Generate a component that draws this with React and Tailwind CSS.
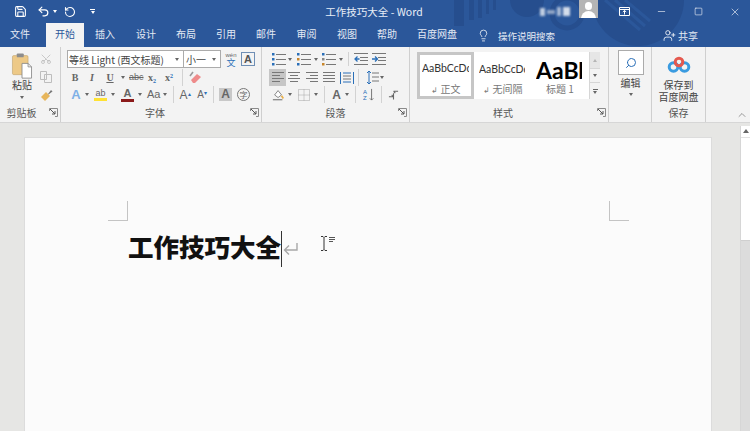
import { Save, Undo2, RotateCw, Minus, Square, X, Lightbulb, UserPlus, Search, Scissors, ChevronUp } from 'lucide-react';

const TABS = [
  ['文件', 'w-[46px]'], ['开始', 'w-[38px]'], ['插入', 'w-[42px]'], ['设计', 'w-[40px]'], ['布局', 'w-[40px]'],
  ['引用', 'w-[40px]'], ['邮件', 'w-[40px]'], ['审阅', 'w-[41px]'], ['视图', 'w-[40px]'], ['帮助', 'w-[40px]'], ['百度网盘', 'w-[60px]'],
];

// petite flèche des boutons déroulants
function Caret({ cls = 'border-t-[#666]' }) {
  return <span className={`block w-0 h-0 border-x-[2.5px] border-x-transparent border-t-[3px] ${cls}`}></span>;
}

function Launcher() {
  return (
    <svg width="9" height="9" viewBox="0 0 9 9" className="shrink-0">
      <path d="M.5 3V.5H8.500V8.500H6" fill="none" stroke="#8a8a8a" />
      <path d="M1 1l5 5M6 3v3H3" fill="none" stroke="#555" />
    </svg>
  );
}

function Sep({ cls = 'h-[17px]' }) {
  return <span className={`block w-px bg-[#d2d2d2] ${cls}`}></span>;
}

// lignes de texte pour les icônes de paragraphe
function Lines({ rows, color = '#777' }) {
  return (
    <svg width="14" height="13" viewBox="0 0 14 13" className="block">
      {rows.map((r, i) => <rect key={i} x={r[0]} y={i * 3 + 1} width={r[1]} height="1" fill={color} />)}
    </svg>
  );
}

function ListIcon({ marks }) {
  return (
    <svg width="14" height="14" viewBox="0 0 14 14" className="block">
      {[1, 6, 11].map((y, i) => (
        <g key={y}>
          <rect x="0" y={y} width="2.500" height="2.500" fill={marks[i]} />
          <rect x="4" y={y + 1} width="10" height="1" fill="#777" />
        </g>
      ))}
    </svg>
  );
}

function IndentIcon({ flip }) {
  return (
    <svg width="14" height="12" viewBox="0 0 14 12" className="block">
      <path d="M0 .5h14M6 4.500h8M6 7.500h8M0 11.500h14" stroke="#777" />
      <path d={flip ? 'M0 6h5M3 3.500L5.500 6 3 8.500' : 'M5.500 6H1M3.500 3.500L1 6l2.500 2.500'} fill="none" stroke="#2a6fb8" strokeWidth="1.300" />
    </svg>
  );
}

function ClipboardIcon() {
  return (
    <svg width="22" height="26" viewBox="0 0 24 30" className="block">
      <rect x="1" y="3" width="18" height="22" rx="1.500" fill="#edc987" stroke="#b99a63" strokeWidth=".6" />
      <rect x="6" y="0.500" width="8" height="4.500" rx="1" fill="#8d8d8d" />
      <path d="M12 12h7l4 4v13H12z" fill="#fff" stroke="#8a8a8a" />
      <path d="M19 12v4h4" fill="none" stroke="#8a8a8a" />
    </svg>
  );
}

function BaiduLogo() {
  return (
    <svg width="24" height="18" viewBox="0 0 24 18" className="block">
      <circle cx="6.500" cy="11" r="4.300" fill="none" stroke="#3a9be0" strokeWidth="3" />
      <circle cx="17.500" cy="11" r="4.300" fill="none" stroke="#3a9be0" strokeWidth="3" />
      <circle cx="12" cy="6" r="3.800" fill="none" stroke="#e5594f" strokeWidth="3" />
    </svg>
  );
}

function StyleCard({ sample, sampleCls, clipCls, label, mark, cls }) {
  return (
    <div className={`flex flex-col items-center shrink-0 overflow-hidden ${cls}`}>
      <div className={`h-[27px] w-full flex items-center font-['Lato',sans-serif] ${sampleCls}`}>
        <span className={`block overflow-hidden whitespace-nowrap ${clipCls}`}>{sample}</span>
      </div>
      <div className="text-[10px] leading-[13px] text-[#777]">{mark && <span className="mr-[3px] text-[8px]">↲</span>}{label}</div>
    </div>
  );
}

function Group({ cls, label, labelCls = '', launcher, children }) {
  return (
    <div className={`h-[75px] flex flex-col shrink-0 border-r border-[#cfcfcf] ${cls}`}>
      <div className="flex-1 min-h-0">{children}</div>
      <div className={`relative h-[17px] text-[10px] leading-[15px] text-[#555] text-center ${labelCls}`}>
        {label}
        {launcher && <span className="absolute right-[2px] top-[3px]"><Launcher /></span>}
      </div>
    </div>
  );
}

export default function App() {
  return (
    <div className="w-[750px] h-[431px] overflow-hidden flex flex-col bg-[#e6e6e4] font-['Noto_Sans_CJK_SC',sans-serif] text-[#444]">
      <div className="relative bg-[#2b579a] shrink-0 overflow-hidden">
        {/* Motif décoratif de la barre de titre */}
        <svg className="absolute left-[440px] top-0" width="250" height="47" viewBox="0 0 250 47">
          <g fill="#264e8e">
            <rect x="14" y="0" width="10" height="26" /><rect x="29" y="0" width="5" height="20" />
            <rect x="38" y="0" width="4" height="18" /><rect x="46" y="0" width="3" height="14" /><rect x="53" y="0" width="3" height="10" />
            <circle cx="87" cy="0" r="17" />
            <circle cx="198" cy="0" r="46" />
          </g>
          <g fill="none" stroke="#2b579a" strokeWidth="3">
            <path d="M165 0l35 30M175 0l30 26M185 0l25 21" />
          </g>
          <circle cx="127" cy="13" r="15" fill="none" stroke="#264e8e" strokeWidth="5" />
        </svg>

        {/* Barre de titre */}
        <header className="relative h-[23px] text-white flex items-center">
          <div className="flex items-center pl-[14px] w-[300px]">
            <Save size={13} strokeWidth={2} className="w-[13px]" />
            <Undo2 size={13} strokeWidth={2.2} className="ml-[10px]" />
            <span className="ml-[3px]"><Caret cls="border-t-white" /></span>
            <RotateCw size={12} strokeWidth={2.2} className="ml-[7px] -scale-x-100" />
            <span className="ml-[14px] flex flex-col items-center gap-px">
              <span className="w-[5px] h-px bg-white"></span>
              <Caret cls="border-t-white" />
            </span>
          </div>
          <div className="w-[148px] text-center text-[10.5px] whitespace-nowrap text-[#e8eef7]">工作技巧大全 - Word</div>
          <div className="ml-[92px] flex items-center gap-[2px] w-[32px] blur-[1px]">
            <span className="w-[5px] h-[8px] bg-white/70"></span><span className="w-[8px] h-[4px] bg-white/50"></span>
            <span className="w-[4px] h-[9px] bg-white/60"></span><span className="w-[7px] h-[9px] bg-white/80"></span>
          </div>
          <div className="relative ml-[7px] w-[19px] h-[18px] -mt-[5px] bg-[#b5b5b5] overflow-hidden">
            <span className="absolute left-[6px] top-[2px] w-[7px] h-[8px] rounded-full bg-white"></span>
            <span className="absolute left-[2px] top-[11px] w-[15px] h-[10px] rounded-t-full bg-white"></span>
          </div>
          <div className="ml-[21px] flex items-center">
            <svg width="11" height="9" viewBox="0 0 11 9"><path d="M.5.5h10v8H.5zM.5 2.500h10M5.500 7.500v-4M3.800 5l1.700-1.500L7.200 5" fill="none" stroke="#fff" /></svg>
            <Minus size={11} strokeWidth={1.300} className="ml-[26px]" />
            <Square size={9} strokeWidth={1.500} className="ml-[27px]" />
            <X size={12} strokeWidth={1.200} className="ml-[26px]" />
          </div>
        </header>

        {/* Onglets */}
        <nav className="relative h-[24px] text-white flex items-end text-[10px]">
          {TABS.map(([name, w], i) => (
            <div
              key={name}
              className={`${w} h-[24px] text-center leading-[22px] ${name === '开始' ? 'bg-[#f3f3f3] text-[#2b579a]' : 'text-[#e4eaf4]'} ${i === 0 ? 'pr-[6px]' : ''}`}
            >
              {name}
            </div>
          ))}
          <Lightbulb size={13} strokeWidth={1.400} className="ml-[10px] mb-[5px]" />
          <span className="ml-[8px] w-[58px] text-[9.500px] leading-[22px] whitespace-nowrap text-[#e4eaf4]">操作说明搜索</span>
          <UserPlus size={13} strokeWidth={1.500} className="ml-[107px] mb-[5px]" />
          <span className="ml-[2px] leading-[22px] text-[#e4eaf4]">共享</span>
        </nav>
      </div>

      {/* Ruban */}
      <section className="relative h-[75px] bg-[#f3f3f3] flex shrink-0 border-b border-[#d6d6d6] box-content">
        <Group cls="w-[61px]" label="剪贴板" labelCls="pr-[17px]" launcher>
          <div className="flex pl-[11px] pt-[6px]">
            <div className="w-[22px] flex flex-col items-center">
              <ClipboardIcon />
              <span className="text-[10px] leading-[13px] -mt-[1px] whitespace-nowrap">粘贴</span>
              <span className="mt-[5px]"><Caret /></span>
            </div>
            <div className="ml-[6px] flex flex-col items-center gap-[6px] w-[14px]">
              <Scissors size={12} strokeWidth={1.400} className="text-[#b5b5b5] -rotate-90" />
              <svg width="12" height="12" viewBox="0 0 12 12" className="block"><path d="M.5.5h6v8h-6zM4.500 3.500h7v8h-7z" fill="#f3f3f3" stroke="#bdbdbd" /></svg>
              <svg width="13" height="13" viewBox="0 0 13 13" className="block"><path d="M1 8l5-5 4 4-5 5z" fill="#e7b65c" /><path d="M8 5l3-4 1.500 1.500-4 3z" fill="#777" /></svg>
            </div>
          </div>
        </Group>

        <Group cls="w-[201px]" label="字体" labelCls="pr-[12px]" launcher>
          <div className="pl-[6px] pt-[3px] flex flex-col">
            <div className="flex items-center">
              <div className="w-[117px] h-[18px] bg-white border border-[#ababab] flex items-center justify-between pl-[1px] pr-[4px] text-[10px] whitespace-nowrap">
                等线 Light (西文标题)<Caret />
              </div>
              <div className="w-[37px] h-[18px] bg-white border border-l-0 border-[#ababab] flex items-center justify-between pl-[2px] pr-[4px] text-[10px]">
                小一<Caret />
              </div>
              <div className="ml-[3px] w-[14px] flex flex-col items-center leading-none">
                <span className="text-[6px] text-[#666] font-['Liberation_Sans',sans-serif]">wén</span>
                <span className="text-[9px] text-[#2a6fb8]">文</span>
              </div>
              <div className="ml-[3px] w-[14px] h-[14px] border border-[#6f8fb5] flex items-center justify-center text-[11px] font-bold font-['Liberation_Sans',sans-serif] text-[#555]">A</div>
            </div>
            <div className="mt-[2px] h-[15px] flex items-center font-bold text-[10px] text-[#666] font-['Liberation_Serif',serif]">
              <span className="ml-[2px] w-[12px] text-center">B</span>
              <span className="ml-[5px] w-[12px] text-center italic">I</span>
              <span className="ml-[6px] w-[12px] text-center underline">U</span>
              <span className="ml-[5px]"><Caret /></span>
              <span className="ml-[4px] w-[14px] text-center line-through font-['Liberation_Sans',sans-serif] font-normal text-[9px]">abc</span>
              <span className="ml-[3px] w-[12px] text-center">x<sub className="text-[#2a6fb8] text-[6px]">2</sub></span>
              <span className="ml-[5px] w-[12px] text-center">x<sup className="text-[#2a6fb8] text-[6px]">2</sup></span>
              <span className="ml-[7px]"><Sep /></span>
              <svg className="ml-[6px] block" width="14" height="14" viewBox="0 0 14 14"><path d="M2 9l6-6 4 3-6 6H4z" fill="#ee8b8b" /><path d="M4 1L1 5" stroke="#999" strokeWidth="1.500" /></svg>
            </div>
            <div className="mt-px h-[17px] flex items-center font-['Liberation_Sans',sans-serif] text-[#666]">
              <span className="ml-[3px] w-[12px] text-center text-[13px] font-bold text-[#7fb0e6]">A</span>
              <span className="ml-[3px]"><Caret /></span>
              <span className="ml-[5px] w-[13px] flex flex-col items-center text-[9px] leading-[10px]">ab<span className="w-[13px] h-[3px] bg-[#ffe233]"></span></span>
              <span className="ml-[4px]"><Caret /></span>
              <span className="ml-[6px] w-[13px] flex flex-col items-center text-[11px] font-bold leading-[11px]">A<span className="w-[13px] h-[3px] bg-[#8b1a1a]"></span></span>
              <span className="ml-[4px]"><Caret /></span>
              <span className="ml-[5px] w-[13px] text-[11px]">Aa</span>
              <span className="ml-[3px]"><Caret /></span>
              <span className="ml-[6px]"><Sep /></span>
              <span className="ml-[4px] w-[14px] text-[12px] text-center leading-none">A<sup className="text-[#2a6fb8] text-[6px]">▴</sup></span>
              <span className="ml-[3px] w-[14px] text-[10px] text-center leading-none">A<sup className="text-[#2a6fb8] text-[6px]">▾</sup></span>
              <span className="ml-[4px]"><Sep /></span>
              <span className="ml-[5px] w-[13px] h-[13px] bg-[#c8c8c8] text-[12px] font-bold leading-[13px] text-center">A</span>
              <span className="ml-[5px] w-[13px] h-[13px] rounded-full border border-[#777] text-[8px] leading-[11px] text-center font-['Noto_Sans_CJK_SC',sans-serif]">字</span>
            </div>
          </div>
        </Group>

        <Group cls="w-[148px]" label="段落" launcher>
          <div className="pl-[7px] pt-[5px] flex flex-col">
            <div className="h-[14px] flex items-center">
              <span className="ml-[3px]"><ListIcon marks={['#2a6fb8', '#2a6fb8', '#2a6fb8']} /></span>
              <span className="ml-[2px]"><Caret /></span>
              <span className="ml-[5px]"><ListIcon marks={['#2a6fb8', '#c8862a', '#2a6fb8']} /></span>
              <span className="ml-[3px]"><Caret /></span>
              <span className="ml-[4px]"><ListIcon marks={['#2a6fb8', '#888', '#c8862a']} /></span>
              <span className="ml-[3px]"><Caret /></span>
              <span className="ml-[5px]"><Sep cls="h-[14px]" /></span>
              <span className="ml-[5px]"><IndentIcon /></span>
              <span className="ml-[4px]"><IndentIcon flip /></span>
            </div>
            <div className="mt-[3px] h-[17px] flex items-center">
              <span className="w-[17px] h-[17px] bg-[#c6c6c6] flex items-center justify-center">
                <Lines rows={[[1, 12], [1, 8], [1, 12], [1, 8]]} />
              </span>
              <span className="ml-[1px]"><Lines rows={[[1, 12], [3, 8], [1, 12], [3, 8]]} /></span>
              <span className="ml-[4px]"><Lines rows={[[1, 12], [5, 8], [1, 12], [5, 8]]} /></span>
              <span className="ml-[3px]"><Lines rows={[[1, 12], [1, 12], [1, 12], [1, 12]]} /></span>
              <span className="ml-[4px]">
                <svg width="14" height="14" viewBox="0 0 14 14" className="block"><path d="M.5 1v12M13.500 1v12M3 2h8M3 11h8" stroke="#2a6fb8" /><path d="M3 5h8M3 8h8" stroke="#777" /></svg>
              </span>
              <span className="ml-[4px]"><Sep /></span>
              <span className="ml-[7px]">
                <svg width="13" height="15" viewBox="0 0 13 15" className="block"><path d="M3 1v13M1 3l2-2 2 2M1 12l2 2 2-2" fill="none" stroke="#2a6fb8" /><path d="M6 3h7M6 7h7M6 11h7" stroke="#777" /></svg>
              </span>
              <span className="ml-[1px]"><Caret /></span>
            </div>
            <div className="h-[17px] flex items-center">
              <span className="ml-[3px]">
                <svg width="13" height="15" viewBox="0 0 15 15" className="block"><path d="M3 8l4-5 4 5-4 3z" fill="#fff" stroke="#777" /><path d="M11 9l2 3" stroke="#e9b04a" strokeWidth="2" /><path d="M1 13.500h11" stroke="#888" strokeWidth="1.500" /></svg>
              </span>
              <span className="ml-[3px]"><Caret /></span>
              <span className="ml-[6px]">
                <svg width="12" height="12" viewBox="0 0 12 12" className="block"><path d="M.5.5h11v11H.5zM6 .5v11M.5 6h11" fill="none" stroke="#a5a5a5" strokeDasharray="1 1" /></svg>
              </span>
              <span className="ml-[4px]"><Caret /></span>
              <span className="ml-[6px]"><Sep /></span>
              <span className="ml-[5px] w-[13px] text-center text-[12px] font-bold leading-none font-['Liberation_Sans',sans-serif] text-[#666]">A</span>
              <span className="ml-[2px]"><Caret /></span>
              <span className="ml-[6px]"><Sep /></span>
              <span className="ml-[7px]">
                <svg width="12" height="15" viewBox="0 0 14 15" className="block"><text x="0" y="7" fontSize="7" fill="#2a6fb8" fontFamily="Liberation Sans">A</text><text x="0" y="14" fontSize="7" fill="#2a6fb8" fontFamily="Liberation Sans">Z</text><path d="M10 1v13M8 12l2 2 2-2" fill="none" stroke="#666" /></svg>
              </span>
              <span className="ml-[6px]"><Sep /></span>
              <span className="ml-[6px]">
                <svg width="11" height="13" viewBox="0 0 12 13" className="block"><path d="M1 9h5M6 9l-2-2M11 3H6M6 3l2 2M6 5v7" fill="none" stroke="#666" strokeWidth="1.200" /></svg>
              </span>
            </div>
          </div>
        </Group>

        <Group cls="w-[199px]" label="样式" labelCls="pr-[12px]" launcher>
          <div className="pl-[7px] pt-[5px]">
            <div className="w-[183px] h-[47px] bg-white flex">
              <StyleCard sample="AaBbCcDd" sampleCls="text-[10.500px] text-[#333] pl-[2px]" clipCls="w-[47px]" label="正文" mark cls="w-[57px] border-[3px] border-[#c6c6c6]" />
              <StyleCard sample="AaBbCcDd" sampleCls="text-[10.500px] text-[#333] pl-[5px] pt-[3px]" clipCls="w-[46px]" label="无间隔" mark cls="w-[57px] pt-[3px]" />
              <StyleCard sample="AaBbCcDd" sampleCls="text-[23px] font-bold text-black pl-[5px] pt-[3px]" clipCls="w-[46px] leading-[27px]" label="标题 1" cls="w-[58px] pt-[3px]" />
              <div className="w-[11px] flex flex-col border-l border-[#d6d6d6] bg-[#f3f3f3] shrink-0">
                <div className="h-[16px] bg-[#e6e6e6] flex items-center justify-center"><span className="w-0 h-0 border-x-[2.5px] border-x-transparent border-b-[3px] border-b-[#b5b5b5]"></span></div>
                <div className="h-[15px] border-y border-[#d6d6d6] flex items-center justify-center"><Caret /></div>
                <div className="h-[16px] flex flex-col items-center justify-center gap-px"><span className="w-[5px] h-px bg-[#666]"></span><Caret /></div>
              </div>
            </div>
          </div>
        </Group>

        <Group cls="w-[43px]" label="">
          <div className="flex flex-col items-center pt-[3px] pl-px">
            <div className="w-[26px] h-[25px] bg-white border border-[#ababab] flex items-center justify-center">
              <Search size={12} strokeWidth={2} className="-scale-x-100 text-[#2a6fb8]" />
            </div>
            <span className="text-[10px] leading-[13px] mt-px">编辑</span>
            <span className="mt-[4px]"><Caret /></span>
          </div>
        </Group>

        <Group cls="w-[54px]" label="保存">
          <div className="flex flex-col items-center pt-[9px]">
            <BaiduLogo />
            <span className="text-[10px] leading-[12px] mt-[5px] whitespace-nowrap">保存到</span>
            <span className="text-[10px] leading-[12px] whitespace-nowrap">百度网盘</span>
          </div>
        </Group>

        <ChevronUp size={12} strokeWidth={1.300} className="absolute right-[2px] bottom-[1px] text-[#666]" />
      </section>

      {/* Zone du document */}
      <main className="flex-1 min-h-0 flex overflow-hidden bg-[#e6e6e4]">
        <div className="w-[740px] pt-[14px] pl-[24px] pr-[28px] shrink-0">
          <div className="relative w-[688px] h-[320px] bg-[#fbfbfb] border border-[#dcdcdc] pt-[63px] pl-[83px] pr-[82px]">
            <div className="flex justify-between">
              <span className="w-[20px] h-[20px] border-r border-b border-[#c4c4c4]"></span>
              <span className="w-[20px] h-[20px] border-l border-b border-[#c4c4c4]"></span>
            </div>
            <div className="mt-[10px] pl-[20px] flex items-center h-[36px]">
              <h1 className="text-[25.500px] leading-[30px] pb-[6px] font-black text-[#111] whitespace-nowrap">工作技巧大全</h1>
              <span className="w-px h-[36px] bg-[#333]"></span>
              <svg className="ml-[1px]" width="15" height="14" viewBox="0 0 15 14"><path d="M14 1v7H2M6 3.500L1.500 8 6 12.500" fill="none" stroke="#a8a8a8" strokeWidth="1.400" /></svg>
            </div>
            {/* curseur de la souris */}
            <svg className="absolute left-[295px] top-[98px]" width="16" height="15" viewBox="0 0 16 15">
              <path d="M1 .5h2l1 1 1-1h2M4 1.500v12M1 14.500h2l1-1 1 1h2" fill="none" stroke="#333" />
              <path d="M9 1.500h6M9 3.500h6M9 5.500h4" stroke="#555" />
            </svg>
          </div>
        </div>
        <aside className="w-[10px] flex flex-col mt-[3px] border-l border-[#d6d6d6] shrink-0">
          <div className="h-[115px] bg-white flex flex-col items-center pt-[3px] border-b border-[#cfcfcf]">
            <span className="w-0 h-0 border-x-[3px] border-x-transparent border-b-[4px] border-b-[#666]"></span>
            <span className="mt-[4px] w-full h-px bg-[#e2e2e2]"></span>
          </div>
          <div className="flex-1 bg-[#dcdcdc]"></div>
        </aside>
      </main>
    </div>
  );
}
